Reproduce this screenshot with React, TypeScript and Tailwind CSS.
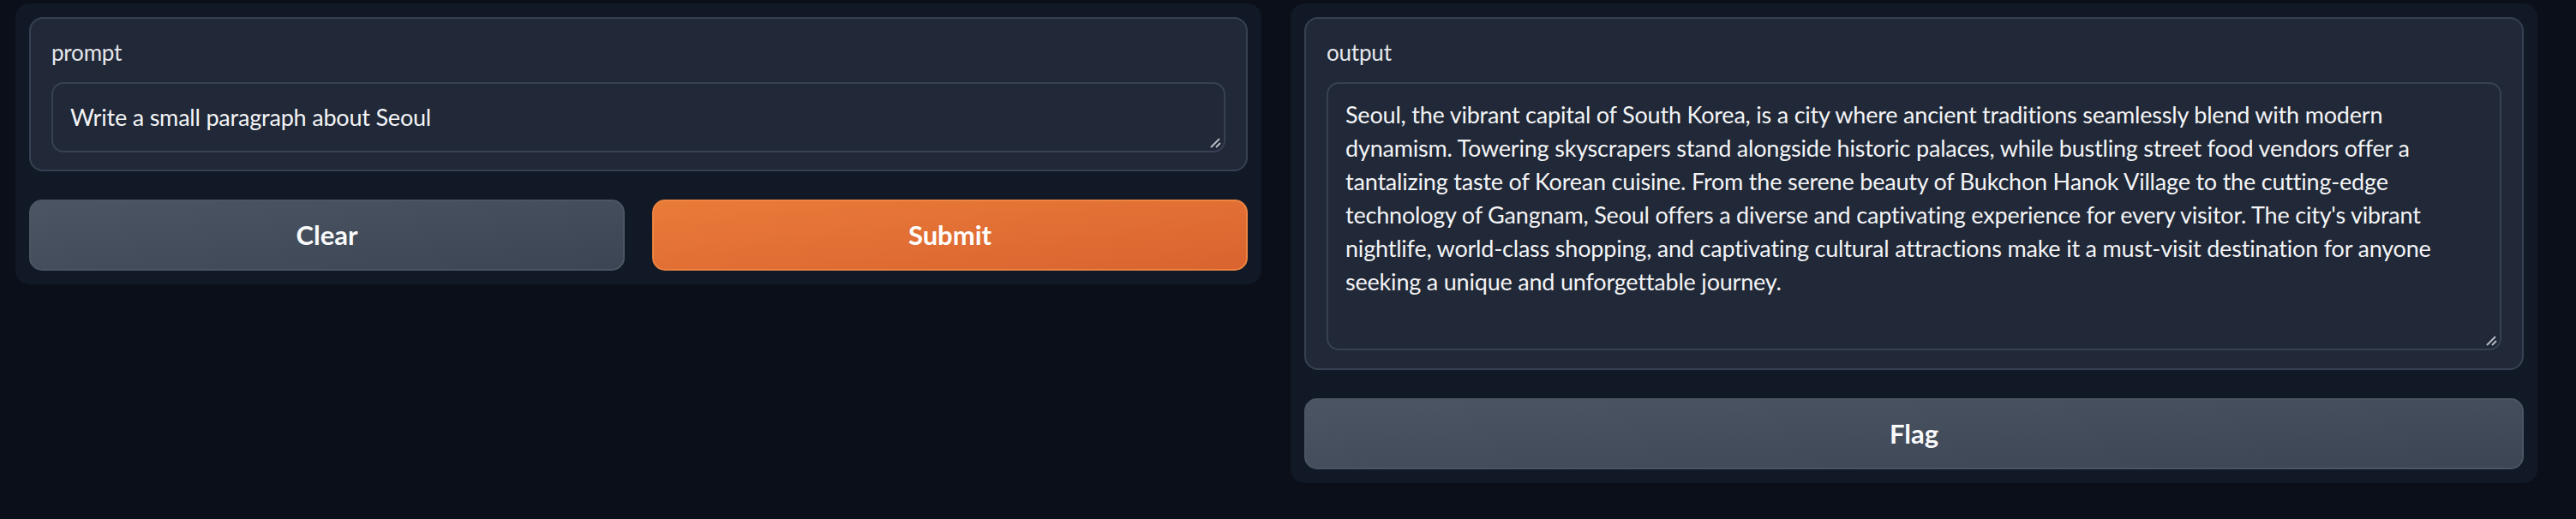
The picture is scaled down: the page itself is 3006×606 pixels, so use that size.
import React from "react";

const FONT = { fontFamily: "Lato, 'Open Sans', sans-serif" };

const LINES = [
  "Seoul, the vibrant capital of South Korea, is a city where ancient traditions seamlessly blend with modern",
  "dynamism. Towering skyscrapers stand alongside historic palaces, while bustling street food vendors offer a",
  "tantalizing taste of Korean cuisine. From the serene beauty of Bukchon Hanok Village to the cutting-edge",
  "technology of Gangnam, Seoul offers a diverse and captivating experience for every visitor. The city's vibrant",
  "nightlife, world-class shopping, and captivating cultural attractions make it a must-visit destination for anyone",
  "seeking a unique and unforgettable journey.",
];

function Grip() {
  return (
    <svg className="absolute right-[3px] bottom-[3px]" width="14" height="14" viewBox="0 0 14 14">
      <line x1="2" y1="13" x2="12" y2="3" stroke="#b8bcc4" strokeWidth="2" />
      <line x1="8" y1="13" x2="13" y2="8" stroke="#b8bcc4" strokeWidth="2" />
    </svg>
  );
}

export default function App() {
  return (
    <div
      className="w-[3006px] h-[606px] bg-[#0b0f19] flex items-start gap-[34px] pt-[4px] pl-[18px] text-[#e5e7eb]"
      style={FONT}
    >
      {/* Left panel */}
      <div className="w-[1454px] bg-[#111826] rounded-[16px] p-[16px] flex flex-col gap-[33px]">
        <div className="border-2 border-[#374151] bg-[#212837] rounded-[16px] pt-[20px] pb-[20px] px-[24px]">
          <div className="text-[26px] leading-[38px] mb-[16px] tracking-[-0.2px] text-[#e5e7eb]">prompt</div>
          <div className="relative border-2 border-[#374151] rounded-[14px] h-[82px] px-[20px] py-[19px] text-[27px] leading-[40px] tracking-[-0.2px] text-[#f3f4f6]">
            Write a small paragraph about Seoul
            <Grip />
          </div>
        </div>
        <div className="flex gap-[32px]">
          <button className="flex-1 h-[83px] rounded-[15px] border-2 border-[#4b5563] bg-gradient-to-br from-[#4b5563] to-[#3c4553] text-[31px] font-bold text-[#f9fafb]">
            Clear
          </button>
          <button className="flex-1 h-[83px] rounded-[15px] border-2 border-[#ee8440] bg-gradient-to-br from-[#e97b39] to-[#da632f] text-[31px] font-bold text-white">
            Submit
          </button>
        </div>
      </div>

      {/* Right panel */}
      <div className="w-[1455px] bg-[#111826] rounded-[16px] p-[16px] flex flex-col gap-[33px]">
        <div className="border-2 border-[#374151] bg-[#212837] rounded-[16px] pt-[20px] pb-[21px] px-[24px]">
          <div className="text-[26px] leading-[38px] mb-[16px] tracking-[-0.2px] text-[#e5e7eb]">output</div>
          <div className="relative border-2 border-[#374151] rounded-[14px] h-[313px] px-[20px] pt-[16px] text-[27px] leading-[39px] tracking-[-0.2px] text-[#f3f4f6]">
            {LINES.map((l, i) => (
              <div key={i} className="whitespace-nowrap">
                {l}
              </div>
            ))}
            <Grip />
          </div>
        </div>
        <button className="w-full h-[83px] rounded-[15px] border-2 border-[#4b5563] bg-gradient-to-br from-[#4b5563] to-[#3c4553] text-[31px] font-bold text-[#f9fafb]">
          Flag
        </button>
      </div>
    </div>
  );
}
